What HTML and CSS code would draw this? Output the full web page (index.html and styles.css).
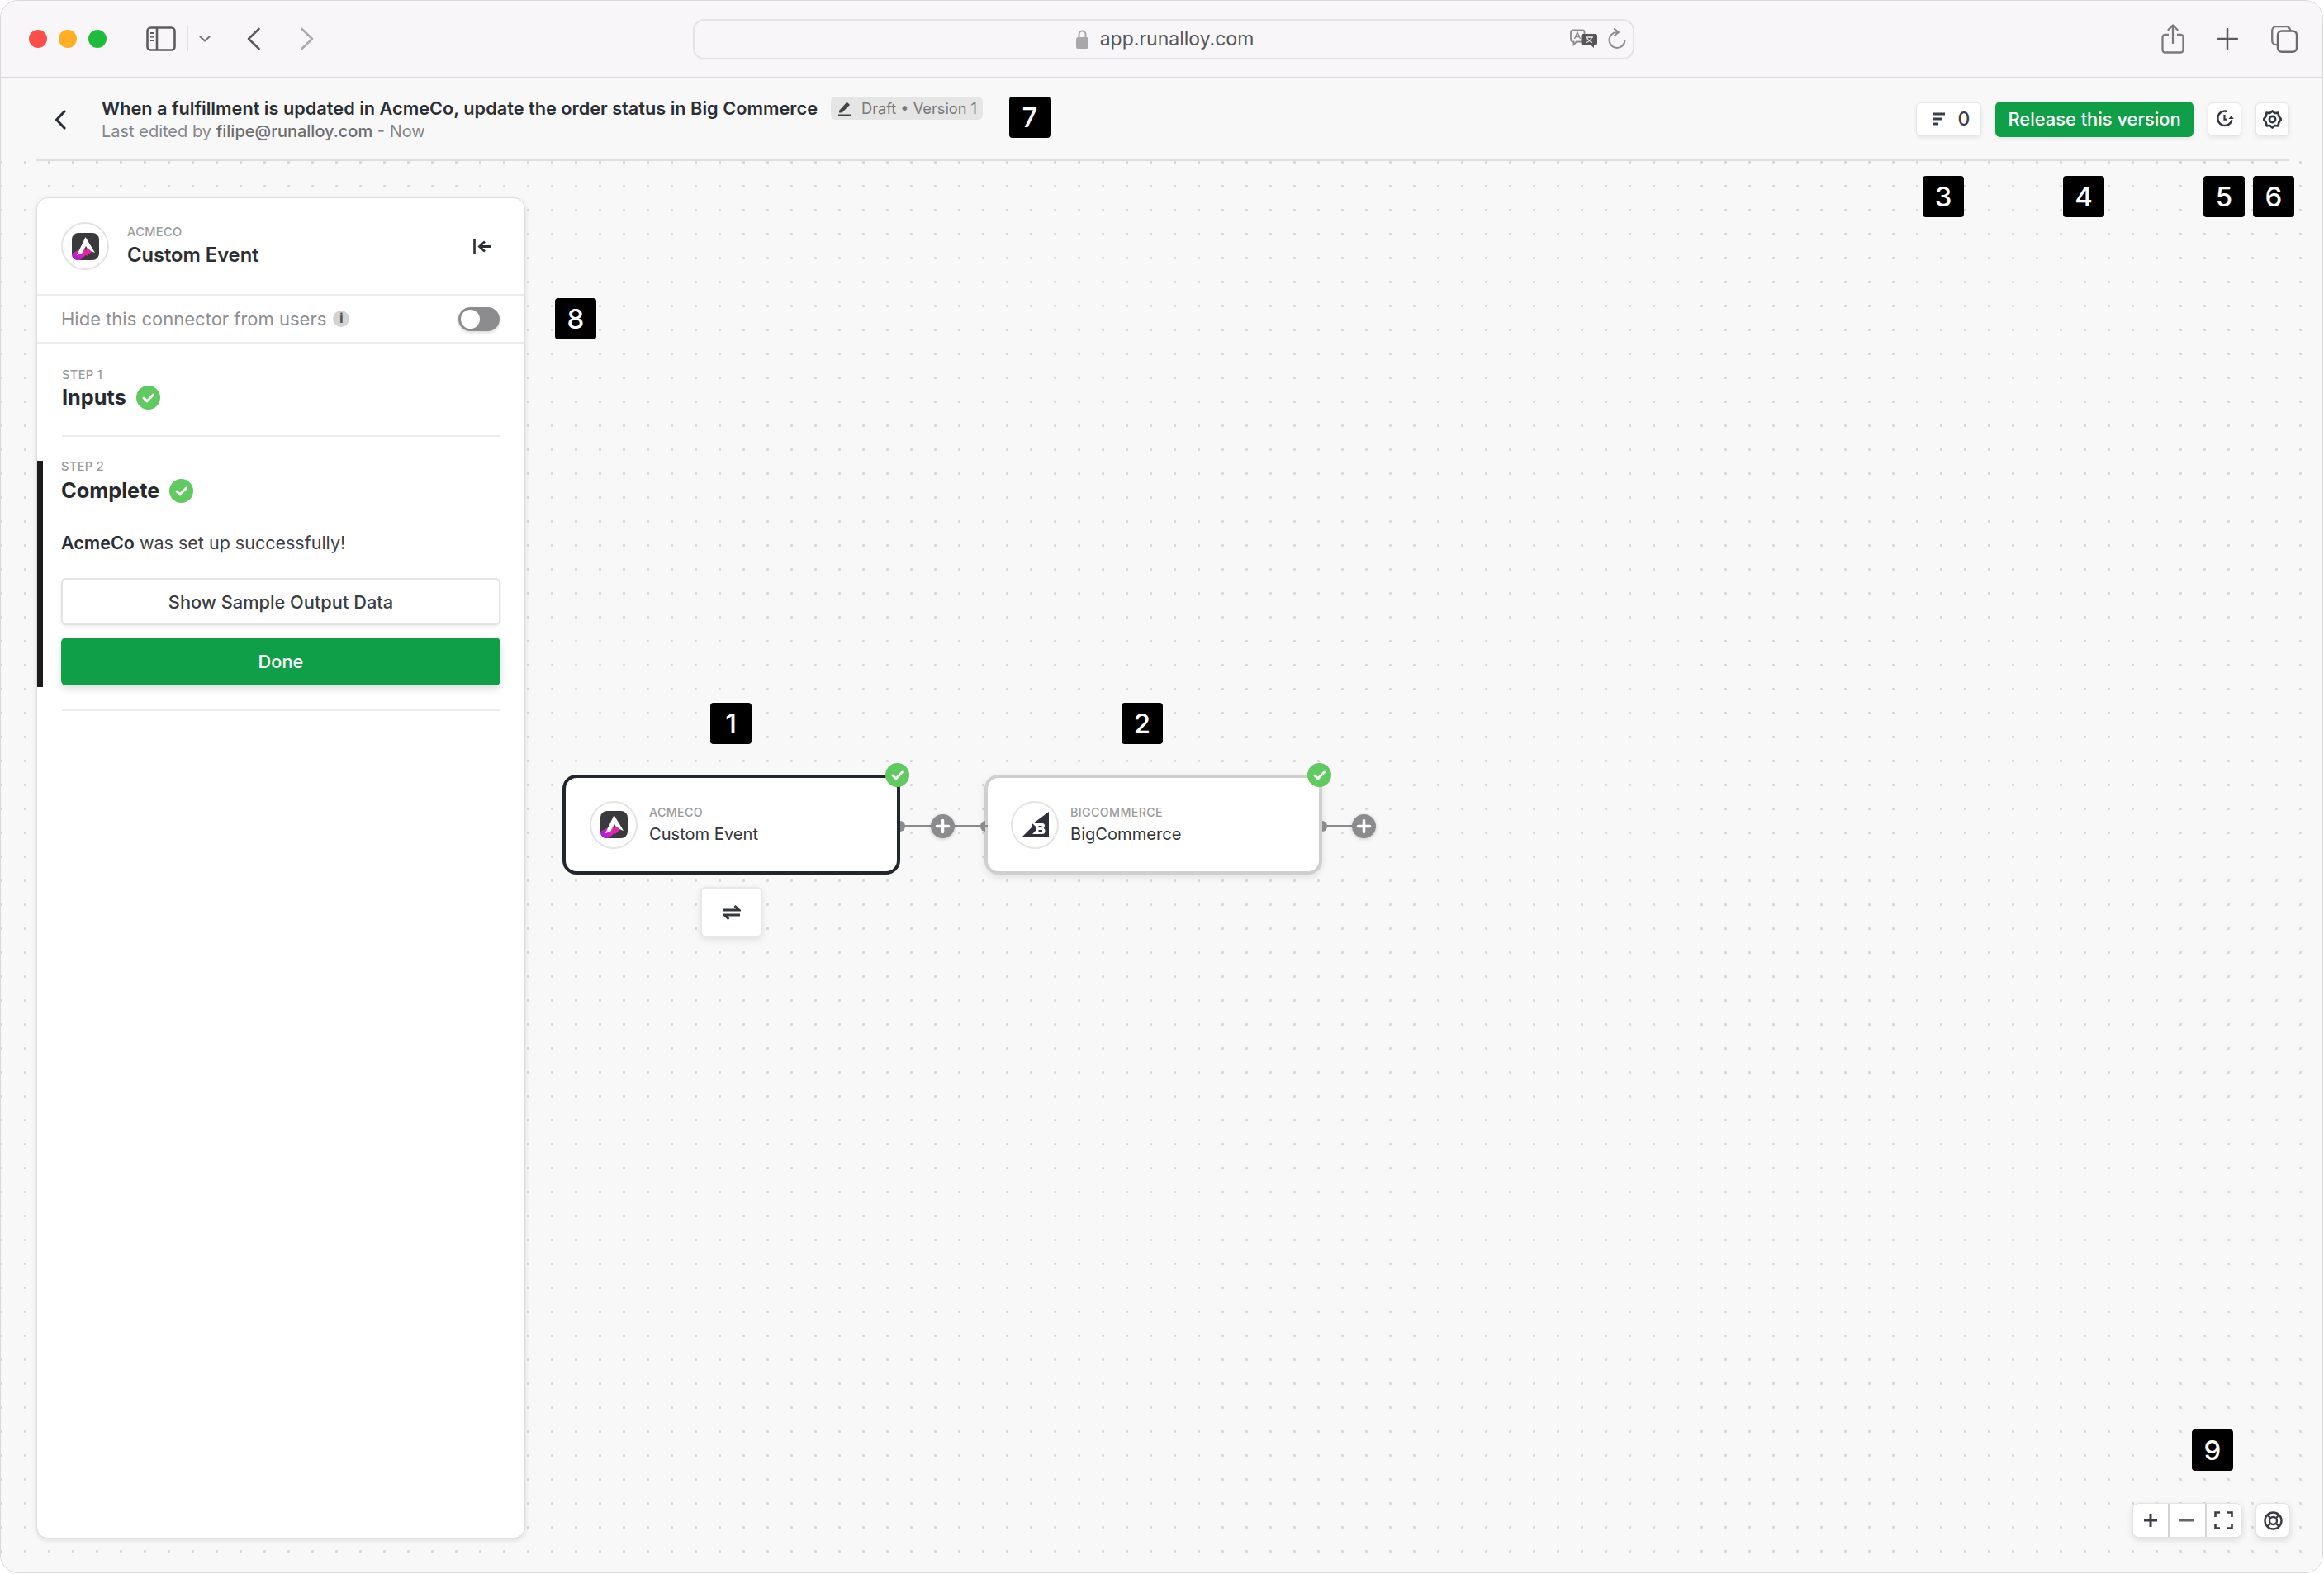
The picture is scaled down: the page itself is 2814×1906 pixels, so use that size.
FILE: index.html
```html
<!DOCTYPE html>
<html lang="en">
<head>
<meta charset="utf-8">
<title>Alloy workflow builder</title>
<link rel="stylesheet" href="styles.css">
</head>
<body>
<svg class="defs" width="0" height="0" aria-hidden="true">
  <defs>
    <linearGradient id="acmeGrad" x1="0" y1="1" x2="1" y2="0.2">
      <stop offset="0" stop-color="#8a1fe0"/>
      <stop offset="0.55" stop-color="#d81fc0"/>
      <stop offset="1" stop-color="#f0468c"/>
    </linearGradient>
    <symbol id="acme" viewBox="0 0 33 33">
      <rect width="33" height="33" rx="8" fill="#3a3a3d"/>
      <path d="M0 25 L13 18 L20 24 L10 33 H8 Q0 33 0 25Z" fill="url(#acmeGrad)"/>
      <path d="M16.5 5 L28 24 L20 21 L17 16 L12 25 L6 27Z" fill="#fff"/>
      <path d="M14 22 L20 19 L24 23 L18 28Z" fill="#e0259f"/>
    </symbol>
    <symbol id="check" viewBox="0 0 29 29">
      <circle cx="14.500" cy="14.500" r="14.500" fill="#60c95f"/>
      <path d="M9 15 L13 18.800 L20.500 11" fill="none" stroke="#fff" stroke-width="3" stroke-linecap="round" stroke-linejoin="round"/>
    </symbol>
    <symbol id="plus" viewBox="0 0 29 29">
      <circle cx="14.500" cy="14.500" r="14.500" fill="#8b8b8d"/>
      <path d="M14.500 7.500 V21.500 M7.500 14.500 H21.500" stroke="#fff" stroke-width="3.500" stroke-linecap="round"/>
    </symbol>
  </defs>
</svg>

<div class="window">
  <header class="toolbar">
    <div class="tb-left">
      <div class="lights">
        <span class="light light-red"></span>
        <span class="light light-amber"></span>
        <span class="light light-green"></span>
      </div>
      <svg class="ic-sidebar" width="36" height="30" viewBox="0 0 36 30">
        <rect x="1.500" y="1.500" width="33" height="27" rx="4" fill="none" stroke="#5c5c5e" stroke-width="2.600"/>
        <path d="M13 2 V28" stroke="#5c5c5e" stroke-width="2.600"/>
        <path d="M5 8 H9.500 M5 12.500 H9.500 M5 17 H9.500" stroke="#5c5c5e" stroke-width="2"/>
      </svg>
      <span class="tb-sep"></span>
      <svg class="ic-caret" width="14" height="8" viewBox="0 0 14 8"><path d="M1.500 1.500 L7 6.500 L12.500 1.500" fill="none" stroke="#77777a" stroke-width="2.200" stroke-linecap="round" stroke-linejoin="round"/></svg>
      <svg class="ic-back" width="18" height="28" viewBox="0 0 18 28"><path d="M15.500 2 L3 14 L15.500 26" fill="none" stroke="#5a5a5c" stroke-width="2.600" stroke-linecap="round" stroke-linejoin="round"/></svg>
      <svg class="ic-forward" width="18" height="28" viewBox="0 0 18 28"><path d="M2.500 2 L15 14 L2.500 26" fill="none" stroke="#a9a9ab" stroke-width="2.600" stroke-linecap="round" stroke-linejoin="round"/></svg>
    </div>
    <div class="urlbar">
      <span class="url-center">
        <svg width="15" height="24" viewBox="0 0 15 24"><path d="M3.500 11 V6.500 a4 4 0 0 1 8 0 V11" fill="none" stroke="#a8a8a8" stroke-width="2"/><rect y="10" width="15" height="14" rx="2.500" fill="#a8a8a8"/></svg>
        <span class="url-text">app.runalloy.com</span>
      </span>
      <span class="url-actions">
        <svg width="34" height="24" viewBox="0 0 34 24">
          <path d="M3.500 1.500 H15 a2.500 2.500 0 0 1 2.500 2.500 V13 a2.500 2.500 0 0 1 -2.500 2.500 H8 L4.500 19 V15.500 H3.500 a2.500 2.500 0 0 1 -2.500 -2.500 V4 a2.500 2.500 0 0 1 2.500 -2.500Z" fill="#f8f6f8" stroke="#8a8a8c" stroke-width="1.800"/>
          <path d="M5.500 12 L9 4 L12.500 12 M6.800 9.500 H11.200" fill="none" stroke="#8a8a8c" stroke-width="1.500"/>
          <path d="M16 6 H30.500 a2.500 2.500 0 0 1 2.500 2.500 V17 a2.500 2.500 0 0 1 -2.500 2.500 H29 V23 L25 19.500 H16 a2.500 2.500 0 0 1 -2.500 -2.500 V8.500 a2.500 2.500 0 0 1 2.500 -2.500Z" fill="#565658"/>
          <path d="M19 10 H28 M23.500 9 V11 M27 16.500 C24 15 21.500 13 20.500 10.500 M26.500 10.500 C25.500 13 23 15 20 16.500" fill="none" stroke="#e2e2e2" stroke-width="1.300"/>
        </svg>
        <svg class="ic-reload" width="22" height="26" viewBox="0 0 22 26"><path d="M11 5 A9.500 9.500 0 1 0 20.500 15" fill="none" stroke="#8e8e90" stroke-width="2.200" stroke-linecap="round"/><path d="M8 1 L13 5 L8 9" fill="none" stroke="#8e8e90" stroke-width="2.200" stroke-linecap="round" stroke-linejoin="round"/></svg>
      </span>
    </div>
    <div class="tb-right">
      <svg width="28" height="36" viewBox="0 0 28 36"><path d="M9 13 H4.500 a3 3 0 0 0 -3 3 V31.500 a3 3 0 0 0 3 3 H23.500 a3 3 0 0 0 3 -3 V16 a3 3 0 0 0 -3 -3 H19" fill="none" stroke="#7a7a7c" stroke-width="2.300"/><path d="M14 23 V2 M8.500 7 L14 1.500 L19.500 7" fill="none" stroke="#7a7a7c" stroke-width="2.300" stroke-linecap="round" stroke-linejoin="round"/></svg>
      <svg class="ic-newtab" width="26" height="26" viewBox="0 0 26 26"><path d="M13 1 V25 M1 13 H25" stroke="#5c5c5e" stroke-width="2.500" stroke-linecap="round"/></svg>
      <svg class="ic-tabs" width="32" height="33" viewBox="0 0 32 33"><rect x="1.200" y="1.200" width="22" height="22" rx="5" fill="none" stroke="#77777a" stroke-width="2.300"/><rect x="8" y="6.500" width="23" height="25.300" rx="5" fill="#f8f6f8" stroke="#6a6a6c" stroke-width="2.400"/></svg>
    </div>
  </header>

  <main class="app">
    <div class="appbar">
      <svg class="ic-appback" width="14" height="24" viewBox="0 0 14 24"><path d="M12 2 L2.500 12 L12 22" fill="none" stroke="#2b2e33" stroke-width="3.200" stroke-linecap="round" stroke-linejoin="round"/></svg>
      <div class="appbar-text">
        <div class="title-row">
          <span class="title">When a fulfillment is updated in AcmeCo, update the order status in Big Commerce</span>
          <span class="badge">
            <svg width="18" height="20" viewBox="0 0 18 20"><path d="M2 13 L11.500 2.500 L15 6 L5.500 15.500 H2Z" fill="#444447"/><path d="M1 18.500 H17" stroke="#444447" stroke-width="2"/></svg>
            Draft • Version 1
          </span>
        </div>
        <div class="edited">Last edited by <b>filipe@runalloy.com</b> - Now</div>
      </div>
      <div class="actions">
        <button class="btn btn-count">
          <svg width="15" height="16" viewBox="0 0 15 16"><path d="M0 2 H15 M0 8 H11 M0 14 H7" stroke="#3b3e43" stroke-width="3"/></svg>
          <span>0</span>
        </button>
        <button class="btn btn-release">Release this version</button>
        <button class="btn btn-icon">
          <svg width="24" height="24" viewBox="0 0 22 22"><path d="M12.500 2.500 A8 8 0 1 0 18.500 13" fill="none" stroke="#33363b" stroke-width="2.300" stroke-linecap="round"/><path d="M10.500 6.500 V11.500 H13" fill="none" stroke="#33363b" stroke-width="2"/><path d="M15 11 L18 7.500 L21 11Z" fill="#33363b"/></svg>
        </button>
        <button class="btn btn-icon">
          <svg width="23" height="23" viewBox="0 0 23 23"><path d="M11.500 1.500 L14.500 4 L18.500 3.700 L19.300 7.800 L22 11.500 L19.300 15.200 L18.500 19.300 L14.500 19 L11.500 21.500 L8.500 19 L4.500 19.300 L3.700 15.200 L1 11.500 L3.700 7.800 L4.500 3.700 L8.500 4Z" fill="none" stroke="#33363b" stroke-width="2.700" stroke-linejoin="round"/><circle cx="11.500" cy="11.500" r="3.600" fill="none" stroke="#33363b" stroke-width="2.700"/></svg>
        </button>
      </div>
    </div>

    <div class="canvas">
      <aside class="panel">
        <div class="panel-head">
          <span class="avatar"><svg class="logo" width="33" height="33"><use href="#acme"/></svg></span>
          <div class="names">
            <div class="eyebrow">ACMECO</div>
            <div class="panel-name">Custom Event</div>
          </div>
          <svg class="ic-collapse" width="22" height="19" viewBox="0 0 22 19"><path d="M1.500 0 V19" stroke="#2b2e33" stroke-width="2.600"/><path d="M22 9.500 H8 M14 3.500 L7.500 9.500 L14 15.500" fill="none" stroke="#2b2e33" stroke-width="2.800"/></svg>
        </div>
        <div class="hide-row">
          <span class="hide-label">Hide this connector from users</span>
          <span class="info">i</span>
          <span class="toggle"><span class="knob"></span></span>
        </div>
        <section class="step">
          <div class="eyebrow">STEP 1</div>
          <div class="step-title">Inputs <svg width="29" height="29"><use href="#check"/></svg></div>
        </section>
        <section class="step-active">
          <div class="eyebrow">STEP 2</div>
          <div class="step-title">Complete <svg width="29" height="29"><use href="#check"/></svg></div>
          <p class="msg"><b>AcmeCo</b> was set up successfully!</p>
          <button class="wide wide-white">Show Sample Output Data</button>
          <button class="wide wide-green">Done</button>
        </section>
        <div class="panel-rule"></div>
      </aside>

      <article class="node node-a">
        <span class="avatar"><svg class="logo" width="33" height="33"><use href="#acme"/></svg></span>
        <div class="names">
          <div class="eyebrow">ACMECO</div>
          <div class="node-name">Custom Event</div>
        </div>
        <svg class="node-check" width="29" height="29"><use href="#check"/></svg>
      </article>
      <article class="node node-b">
        <span class="avatar">
          <svg width="33" height="31" viewBox="0 0 33 31"><path d="M33 0 V31 H0 L12 19 V16 L14 14Z" fill="#2f2f3d"/><path d="M13 14 H25 Q28 14 28 17 Q28 19.500 26.500 20 Q28.500 20.500 28.500 23 Q28.500 27 25 27 H13 L17 23 V18Z M20.500 17 V19 H24.500 V17Z M20.500 22 V24 H25 V22Z" fill="#fff" fill-rule="evenodd"/></svg>
        </span>
        <div class="names">
          <div class="eyebrow">BIGCOMMERCE</div>
          <div class="node-name">BigCommerce</div>
        </div>
        <svg class="node-check" width="29" height="29"><use href="#check"/></svg>
      </article>

      <span class="wire wire-1"></span>
      <span class="handle handle-1"></span>
      <span class="handle handle-1b"></span>
      <svg class="plus plus-1" width="29" height="29"><use href="#plus"/></svg>
      <span class="wire wire-2"></span>
      <span class="handle handle-2"></span>
      <svg class="plus plus-2" width="29" height="29"><use href="#plus"/></svg>

      <button class="swap">
        <svg width="22" height="18" viewBox="0 0 22 18"><path d="M1 6 H20 L14.500 1 M21 12 H2 L7.500 17" fill="none" stroke="#33363b" stroke-width="2.800"/></svg>
      </button>

      <div class="mapctl">
        <div class="mapgroup">
          <button class="mapbtn"><svg width="18" height="18" viewBox="0 0 18 18"><path d="M9 1 V17 M1 9 H17" stroke="#3a3d42" stroke-width="3"/></svg></button>
          <button class="mapbtn"><svg width="18" height="4" viewBox="0 0 18 4"><path d="M0 2 H18" stroke="#63666a" stroke-width="3"/></svg></button>
          <button class="mapbtn"><svg width="23" height="22" viewBox="0 0 23 22"><path d="M1.500 7 V1.500 H7 M16 1.500 H21.500 V7 M21.500 15 V20.500 H16 M7 20.500 H1.500 V15" fill="none" stroke="#3a3d42" stroke-width="2.600"/></svg></button>
        </div>
        <button class="mapbtn mapsolo"><svg width="23" height="23" viewBox="0 0 23 23"><circle cx="11.500" cy="11.500" r="10" fill="none" stroke="#3a3d42" stroke-width="2.400"/><circle cx="11.500" cy="11.500" r="4.500" fill="none" stroke="#3a3d42" stroke-width="2.400"/><path d="M4.500 4.500 L8.300 8.300 M18.500 4.500 L14.700 8.300 M4.500 18.500 L8.300 14.700 M18.500 18.500 L14.700 14.700" stroke="#3a3d42" stroke-width="2.400"/></svg></button>
      </div>

      <span class="tag tag-1">1</span>
      <span class="tag tag-2">2</span>
      <span class="tag tag-3">3</span>
      <span class="tag tag-4">4</span>
      <span class="tag tag-5">5</span>
      <span class="tag tag-6">6</span>
      <span class="tag tag-7">7</span>
      <span class="tag tag-8">8</span>
      <span class="tag tag-9">9</span>
    </div>
  </main>
</div>
</body>
</html>
```

FILE: styles.css
```css
* { box-sizing: border-box; }
html, body { margin: 0; padding: 0; background: #fff; }
body { font-family: "Inter", "Liberation Sans", sans-serif; color: #2b2e33; }
button { font-family: inherit; cursor: pointer; padding: 0; }
.defs { position: absolute; }

.window {
  width: 2813px;
  height: 1905px;
  border: 1px solid #d9d9d9;
  border-radius: 22px;
  overflow: hidden;
  display: flex;
  flex-direction: column;
  background: #f8f8f8;
}

/* browser toolbar */
.toolbar {
  height: 94px;
  flex: none;
  display: grid;
  grid-template-columns: 838px 1140px 1fr;
  align-items: center;
  background: #f8f6f8;
  border-bottom: 2px solid #d9d8d9;
}
.tb-left { display: flex; align-items: center; padding-left: 34px; }
.lights { display: flex; gap: 14px; }
.light { width: 22px; height: 22px; border-radius: 50%; }
.light-red { background: #fc4f4a; }
.light-amber { background: #fdae24; }
.light-green { background: #1fbb3a; }
.ic-sidebar { margin-left: 48px; }
.tb-sep { width: 1px; height: 30px; background: #e2e0e2; margin-left: 14px; }
.ic-caret { margin-left: 13px; }
.ic-back { margin-left: 43px; }
.ic-forward { margin-left: 47px; }

.urlbar {
  height: 49px;
  border: 2px solid #e4e2e4;
  border-radius: 14px;
  display: flex;
  align-items: center;
  position: relative;
  justify-content: center;
}
.url-center { display: flex; align-items: center; gap: 14px; margin-left: 3px; }
.url-text { font-size: 23px; color: #55565a; }
.url-actions {
  position: absolute;
  right: 8px;
  top: 9px;
  display: flex;
  align-items: center;
  gap: 12px;
}
.tb-right { display: flex; align-items: center; padding-left: 638px; }
.ic-newtab { margin-left: 39px; }
.ic-tabs { margin-left: 40px; }

/* app header */
.app { flex: 1; display: flex; flex-direction: column; min-height: 0; }
.appbar {
  height: 100px;
  flex: none;
  margin: 0 40px 0 43px;
  display: flex;
  align-items: center;
  border-bottom: 2px solid #dfdfdf;
}
.ic-appback { margin-left: 22px; margin-top: 2px; }
.appbar-text { margin-left: 43px; margin-top: 0; }
.title-row { display: flex; align-items: center; gap: 16px; }
.title { font-size: 21.720px; font-weight: 600; color: #2b2e33; }
.badge {
  display: inline-flex;
  align-items: center;
  gap: 11px;
  height: 28px;
  padding: 0 7px 0 8px;
  border-radius: 6px;
  background: #e5e5e5;
  font-size: 18.200px;
  color: #77787b;
}
.edited { font-size: 20px; color: #85868a; margin-top: 2px; }
.edited b { font-weight: 500; color: #6c6d71; }
.actions { margin-left: auto; display: flex; align-items: center; gap: 17px; }
.btn {
  height: 41px;
  border: 1px solid #e6e6e6;
  border-radius: 6px;
  background: #fff;
  box-shadow: 0 2px 5px rgba(0,0,0,.08);
  display: flex;
  align-items: center;
  justify-content: center;
}
.btn-count { width: 79px; gap: 16px; padding-left: 6px; font-size: 23px; font-weight: 500; color: #3b3e43; }
.btn-release {
  width: 240px;
  height: 43px;
  border: 0;
  background: #0f9f48;
  color: #fff;
  font-size: 21.900px;
  font-weight: 500;
}
.btn-icon { width: 41px; }

/* canvas */
.canvas {
  flex: 1;
  position: relative;
  min-height: 0;
  display: flex;
  padding: 44px 0 41px 43px;
  background-color: #f8f8f8;
  background-image: radial-gradient(circle, #d7d7d7 1.300px, transparent 1.900px);
  background-size: 29px 29px;
  background-position: -14px -13px;
}

/* side panel */
.panel {
  width: 592px;
  background: #fff;
  border: 1px solid #dcdcdc;
  border-radius: 14px;
  box-shadow: 0 2px 6px rgba(0,0,0,.12);
  display: flex;
  flex-direction: column;
  overflow: hidden;
}
.panel-head {
  height: 118px;
  flex: none;
  display: flex;
  align-items: center;
  padding: 0 40px 0 29px;
  border-bottom: 2px solid #ececec;
  gap: 22px;
}
.avatar {
  width: 58px;
  height: 58px;
  flex: none;
  border-radius: 50%;
  border: 2px solid #e4e4e4;
  display: flex;
  align-items: center;
  justify-content: center;
  background: #fff;
}
.names { flex: 1; }
.eyebrow { font-size: 14.500px; line-height: 18px; letter-spacing: .4px; color: #9a9a9d; font-weight: 500; }
.panel-name { font-size: 23.700px; font-weight: 600; line-height: 30px; margin-top: 4px; color: #2b2e33; }
.hide-row {
  height: 58px;
  flex: none;
  display: flex;
  align-items: center;
  padding: 0 30px 0 29px;
  border-bottom: 2px solid #ececec;
}
.hide-label { font-size: 22px; color: #8e8f92; }
.info {
  width: 20px;
  height: 20px;
  margin-left: 8px;
  border-radius: 50%;
  background: #d3d3d3;
  color: #555;
  font-size: 15px;
  font-weight: 800;
  line-height: 20px;
  text-align: center;
}
.toggle {
  width: 50px;
  height: 29px;
  margin-left: auto;
  border-radius: 15px;
  background: #8c8c8e;
  padding: 3px;
  box-shadow: 0 2px 4px rgba(0,0,0,.15);
}
.knob { display: block; width: 23px; height: 23px; border-radius: 50%; background: #fff; }
.step {
  margin: 0 29px 0 30px;
  padding: 29px 0 30px 0;
  height: 113px;
  flex: none;
  border-bottom: 2px solid #ececec;
}
.step-title {
  display: flex;
  align-items: center;
  gap: 12px;
  font-size: 25.300px;
  font-weight: 700;
  line-height: 30px;
  margin-top: 3px;
  color: #26292e;
}
.step-active {
  margin-top: 29px;
  height: 274px;
  flex: none;
  border-left: 7px solid #1c1c1c;
  padding: 0 29px 0 22px;
}
.step-active .eyebrow { margin-top: -2px; }
.step-active .step-title { margin-top: 5px; }
.msg { margin: 33px 0 0; font-size: 21.500px; line-height: 30px; color: #3e4045; }
.msg b { font-weight: 600; color: #2b2e33; }
.wide {
  display: block;
  width: 100%;
  border-radius: 6px;
  font-size: 21.800px;
}
.wide-white {
  height: 57px;
  margin-top: 28px;
  background: #fff;
  border: 2px solid #e4e4e4;
  box-shadow: 0 1px 3px rgba(0,0,0,.1);
  color: #3a3d42;
  font-weight: 500;
}
.wide-green {
  height: 58px;
  margin-top: 15px;
  background: #0f9f48;
  border: 0;
  color: #fff;
  font-weight: 500;
  box-shadow: 0 4px 10px rgba(0,0,0,.14);
}
.panel-rule { height: 2px; background: #ececec; margin: 27px 29px 0 30px; flex: none; }

/* nodes */
.node {
  position: absolute;
  top: 743px;
  height: 121px;
  display: flex;
  align-items: center;
  gap: 14px;
  background: #fff;
  border-radius: 17px;
}
.node .names { margin-top: 0; }
.node .eyebrow { font-size: 14.200px; }
.node-name { font-size: 20.100px; line-height: 26px; margin-top: 4px; color: #33363b; font-weight: 400; }
.node-a { left: 680px; width: 409px; border: 4px solid #23272d; padding-left: 29px; }
.node-b { left: 1191px; width: 409px; border: 4px solid #cfcfcf; padding-left: 28px; box-shadow: 0 3px 8px rgba(0,0,0,.1); }
.node-check { position: absolute; right: -15px; top: -18px; }

/* connectors */
.wire { position: absolute; top: 804px; height: 3px; background: #8b8b8d; }
.wire-1 { left: 1089px; width: 106px; }
.wire-2 { left: 1600px; width: 40px; }
.handle { position: absolute; top: 799px; width: 6px; height: 13px; background: #8b8b8d; }
.handle-1 { left: 1089px; border-radius: 0 7px 7px 0; }
.handle-1b { left: 1186px; border-radius: 7px 0 0 7px; }
.handle-2 { left: 1600px; border-radius: 0 7px 7px 0; }
.plus { position: absolute; top: 791px; filter: drop-shadow(0 1px 2px rgba(0,0,0,.2)); }
.plus-1 { left: 1126px; }
.plus-2 { left: 1636px; }

.swap {
  position: absolute;
  left: 847px;
  top: 879px;
  width: 75px;
  height: 61px;
  background: #fff;
  border: 2px solid #e8e8e8;
  border-radius: 6px;
  box-shadow: 0 3px 8px rgba(0,0,0,.1);
  display: flex;
  align-items: center;
  justify-content: center;
}

/* map controls */
.mapctl { position: absolute; left: 2581px; top: 1625px; display: flex; gap: 16px; }
.mapgroup {
  display: flex;
  width: 133px;
  height: 42px;
  background: #fff;
  border: 1px solid #e2e2e2;
  border-radius: 8px;
  box-shadow: 0 3px 8px rgba(0,0,0,.12);
  overflow: hidden;
}
.mapbtn {
  flex: 1;
  border: 0;
  border-left: 2px solid #d4d4d4;
  background: #fff;
  display: flex;
  align-items: center;
  justify-content: center;
}
.mapbtn:first-child { border-left: 0; }
.mapsolo {
  width: 42px;
  height: 42px;
  flex: none;
  border: 1px solid #e2e2e2;
  border-radius: 8px;
  box-shadow: 0 3px 8px rgba(0,0,0,.12);
}

/* numbered annotations */
.tag {
  position: absolute;
  width: 50px;
  height: 50px;
  border-radius: 4px;
  background: #000;
  color: #fff;
  font-size: 33px;
  font-weight: 500;
  line-height: 50px;
  text-align: center;
}
.tag-1 { left: 859px; top: 656px; }
.tag-2 { left: 1357px; top: 656px; }
.tag-3 { left: 2327px; top: 18px; }
.tag-4 { left: 2497px; top: 18px; }
.tag-5 { left: 2667px; top: 18px; }
.tag-6 { left: 2727px; top: 18px; }
.tag-7 { left: 1221px; top: -78px; }
.tag-8 { left: 671px; top: 166px; }
.tag-9 { left: 2653px; top: 1536px; }
```
